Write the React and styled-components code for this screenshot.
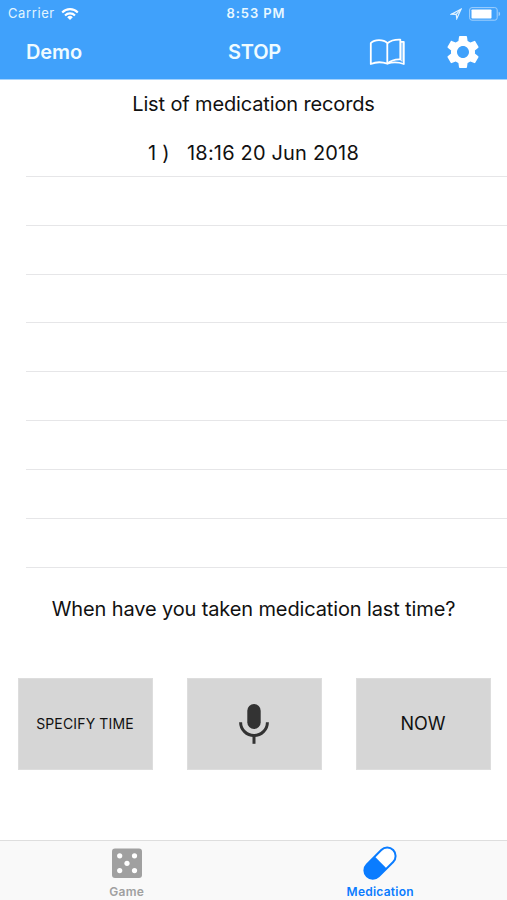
import React, { useState } from 'react';
import styled, { createGlobalStyle } from 'styled-components';
import { MdSettings } from 'react-icons/md';

const GlobalStyle = createGlobalStyle`
    *{
        box-sizing: border-box;
    }
    body{
        margin: 0;
        background-color: #ffffff;
    }
    button{
        border: none;
        padding: 0;
        margin: 0;
        background: none;
        font-family: inherit;
        color: inherit;
        cursor: pointer;
    }
    svg{
        display: block;
    }
`

const Page = styled.div`
    display: flex;
    flex-direction: column;
    height: 900px;
    overflow: hidden;
    font-family: Inter, "Liberation Sans", sans-serif;
    color: #111111;
`

const Header = styled.header`
    height: 80px;
    background-color: #40a1fb;
    border-bottom: 1px solid #a5d3fd;
    color: #ffffff;
`

const StatusBar = styled.div`
    display: grid;
    grid-template-columns: 1fr auto 1fr;
    align-items: center;
    height: 27px;
    padding: 0 6px 0 8px;
    font-size: 13px;
    line-height: 27px;
    .carrier{
        display: flex;
        align-items: center;
        gap: 6px;
        color: #e2f5ff;
        letter-spacing: 0.6px;
    }
    .clock{
        padding-left: 3px;
        font-weight: 600;
        letter-spacing: 0.9px;
        color: #e8f8ff;
    }
    .battery{
        display: flex;
        align-items: center;
        justify-content: flex-end;
        gap: 7px;
    }
`

const NavBar = styled.nav`
    display: grid;
    grid-template-columns: 1fr auto 1fr;
    align-items: center;
    height: 50px;
    padding: 0 24px 0 26px;
    .icons{
        display: flex;
        align-items: center;
        justify-content: flex-end;
        gap: 37px;
    }
`

const NavButton = styled.button`
    justify-self: start;
    font-size: 20px;
    font-weight: 600;
    line-height: 24px;
    letter-spacing: ${props => props.$spacing};
    color: #effbff;
`

const Records = styled.ul`
    margin: 0;
    padding: 0 0 0 26px;
    list-style: none;
`

const Title = styled.h1`
    margin: 0;
    height: 48px;
    font-size: 20px;
    font-weight: 400;
    line-height: 49px;
    letter-spacing: -0.14px;
    text-align: center;
`

const Record = styled.li`
    height: 48.85px;
    padding-right: 26px;
    border-bottom: 1px solid #e6e6e8;
    font-size: 20px;
    line-height: 50px;
    letter-spacing: 0.18px;
    text-align: center;
    white-space: pre;
`

const Question = styled.p`
    margin: 17px 0 0;
    height: 48px;
    font-size: 20px;
    line-height: 48px;
    letter-spacing: -0.13px;
    text-align: center;
`

const Actions = styled.div`
    display: flex;
    gap: 34px;
    padding: 0 16.5px 0 17.5px;
    margin-top: 45px;
`

const ActionButton = styled.button`
    display: flex;
    flex: 1;
    align-items: center;
    justify-content: center;
    height: 92px;
    background-color: #d6d6d6;
    border: 1px solid #dddddd;
    font-size: ${props => props.$size || '18px'};
    letter-spacing: ${props => props.$spacing || '0'};
    color: #111111;
`

const TabBar = styled.footer`
    display: flex;
    height: 60px;
    margin-top: auto;
    background-color: #f9f9f9;
    border-top: 1px solid #dedede;
`

const Tab = styled.button`
    display: flex;
    flex: 1;
    flex-direction: column;
    align-items: center;
    padding-top: 5px;
    font-size: 12px;
    font-weight: 600;
    line-height: 15px;
    letter-spacing: 0.25px;
    color: ${props => props.$active ? '#0a7cff' : '#a0a0a0'};
    svg{
        height: 34px;
    }
    span{
        margin-top: 4px;
    }
`

const WifiIcon = () => (
    <svg width="18" height="14" viewBox="0 0 18 14" fill="none" stroke="#fff" strokeWidth="2.1">
        <path d="M1.2 5.4a11 11 0 0 1 15.6 0" />
        <path d="M4 8.4a7.1 7.1 0 0 1 10 0" />
        <path d="M9 13l-2.8-2.8a4 4 0 0 1 5.6 0z" fill="#fff" stroke="none" />
    </svg>
)

const LocationIcon = () => (
    <svg width="12" height="12" viewBox="0 0 12 12" fill="none" stroke="#e2f3ff" strokeWidth="1.2">
        <path d="M11 1.2L6.8 10.6L6.2 6.4L1.4 6.2z" />
        <path d="M11 1.2L6.2 6.4" />
    </svg>
)

const BatteryIcon = () => (
    <svg width="32" height="14" viewBox="0 0 32 14">
        <rect x="0.6" y="0.6" width="27.6" height="12.6" rx="2.4" fill="none" stroke="#a0d0fd" strokeWidth="1" />
        <rect x="2.5" y="2.5" width="20" height="9" rx="0.8" fill="#fff" />
        <path d="M29.6 4.8c2 .6 2 3.8 0 4.4z" fill="#a0d0fd" />
    </svg>
)

const BookIcon = () => (
    <svg width="38" height="30" viewBox="0 0 38 30" fill="none" stroke="#fff" strokeWidth="1.8" strokeLinejoin="round">
        <path d="M19.3 26.7C14 24.8 8 24.8 2.8 27V6.2C5 4 8.2 3.2 11 3.2C14.4 3.2 17.4 4.2 19.3 6.2z" />
        <path d="M19.3 6.2C22.4 3.6 27 2.4 32.3 2.6V22.4C27 22.2 22.4 23.8 19.3 26.7" />
        <path d="M32.3 4.9H35.8V27C30.5 25.2 24.5 25 19.3 26.7" />
        <path d="M34 5V24.4L32.3 22.6" strokeWidth="0.9" />
    </svg>
)

const MicIcon = () => (
    <svg width="32" height="42" viewBox="0 0 32 42" fill="none" stroke="#333333" strokeWidth="3">
        <rect x="9.3" y="1" width="13.4" height="25" rx="6.7" fill="#333333" stroke="none" />
        <path d="M2.6 19.2a13.4 13.4 0 0 0 26.8 0" />
        <path d="M16 32v8.8" />
    </svg>
)

const DiceIcon = () => (
    <svg width="32" height="34" viewBox="0 0 32 34" fill="#fff">
        <rect x="1" y="2.5" width="30" height="29.5" rx="3" fill="#a0a0a0" />
        <circle cx="8.7" cy="9.8" r="2.6" />
        <circle cx="23.5" cy="9.8" r="2.6" />
        <circle cx="16" cy="17.3" r="2.6" />
        <circle cx="8.7" cy="24.6" r="2.6" />
        <circle cx="23.5" cy="24.6" r="2.6" />
    </svg>
)

const PillIcon = () => (
    <svg width="34" height="34" viewBox="0 0 34 34">
        <g transform="translate(17 17.2) rotate(-45)">
            <rect x="-18.6" y="-8.4" width="37.2" height="16.8" rx="8.4" fill="#fff" stroke="#0a7cff" strokeWidth="2" />
            <path d="M1 -8.4H-10.2A8.4 8.4 0 0 0 -10.2 8.4H1z" fill="#0a7cff" />
        </g>
    </svg>
)

function App() {
    const [tab, setTab] = useState('medication')
    const rows = ['1 )   18:16 20 Jun 2018', '', '', '', '', '', '', '', '']

    return (
        <Page>
            <GlobalStyle />
            <Header>
                <StatusBar>
                    <div className='carrier'>Carrier <WifiIcon /></div>
                    <div className='clock'>8:53 PM</div>
                    <div className='battery'><LocationIcon /><BatteryIcon /></div>
                </StatusBar>
                <NavBar>
                    <NavButton $spacing='-0.1px'>Demo</NavButton>
                    <NavButton $spacing='-0.2px'>STOP</NavButton>
                    <div className='icons'>
                        <button><BookIcon /></button>
                        <button><MdSettings size={40} color='#ffffff' /></button>
                    </div>
                </NavBar>
            </Header>

            <Title>List of medication records</Title>
            <Records>
                {rows.map((row, i) => (
                    <Record key={i}>{row}</Record>
                ))}
            </Records>

            <Question>When have you taken medication last time?</Question>
            <Actions>
                <ActionButton $size='14px' $spacing='0.15px'>SPECIFY TIME</ActionButton>
                <ActionButton><MicIcon /></ActionButton>
                <ActionButton>NOW</ActionButton>
            </Actions>

            <TabBar>
                <Tab $active={tab === 'game'} onClick={() => setTab('game')}>
                    <DiceIcon />
                    <span>Game</span>
                </Tab>
                <Tab $active={tab === 'medication'} onClick={() => setTab('medication')}>
                    <PillIcon />
                    <span>Medication</span>
                </Tab>
            </TabBar>
        </Page>
    )
}

export default App
